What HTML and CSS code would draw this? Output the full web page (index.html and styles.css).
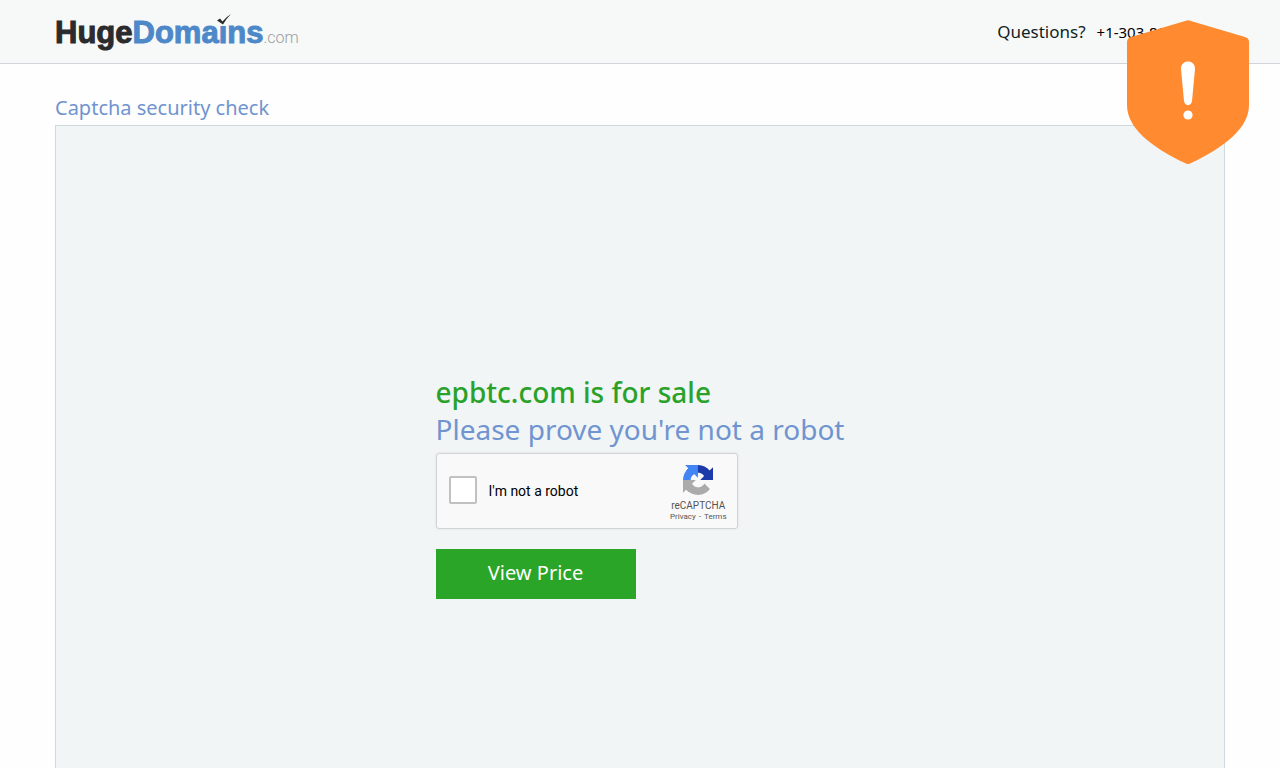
FILE: index.html
```html
<!DOCTYPE html>
<html lang="en">
<head>
<meta charset="utf-8">
<meta name="viewport" content="width=device-width, initial-scale=1">
<title>HugeDomains.com - Captcha security check</title>
<link rel="stylesheet" href="styles.css">
</head>
<body>
<header class="site-header">
  <div class="container header-row">
    <a class="logo" href="#"><span class="logo-huge">Huge</span><span class="logo-domains">Doma<span class="logo-i">i<svg class="logo-check" viewBox="0 0 16 13" aria-hidden="true"><rect x="4" y="5" width="8" height="7" fill="#f7f9f8"/><path d="M1 6.500 4 4.500 6.500 7.500Q10 3 15 0 10 5 7 10.500Z" fill="#2b2b2d"/></svg></span>ns</span><span class="logo-com">.com</span></a>
    <div class="contact"><span class="contact-label">Questions?</span><a class="phone" href="tel:+13038930552">+1-303-893-0552</a></div>
  </div>
</header>
<main class="container main">
  <h1 class="page-title">Captcha security check</h1>
  <section class="panel">
    <form class="check-form">
      <h2 class="domain">epbtc.com is for sale</h2>
      <p class="prompt">Please prove you're not a robot</p>
      <div class="captcha">
        <input class="captcha-box" type="checkbox" id="robot">
        <label class="captcha-label" for="robot">I'm not a robot</label>
        <div class="captcha-brand">
          <svg class="captcha-logo" viewBox="0 0 64 64" aria-hidden="true">
            <path fill="#1c3aa9" d="M64 31.955l-.014-1.37V4.687l-7.16 7.16C50.967 4.674 42.05.093 32.065.093c-10.39 0-19.622 4.96-25.458 12.64l11.736 11.86a15.55 15.55 0 0 1 4.754-5.334c2.05-1.6 4.952-2.906 8.968-2.906.485 0 .86.057 1.135.163 4.976.393 9.288 3.14 11.828 7.124l-8.307 8.307L64 31.953"/>
            <path fill="#4285f4" d="M31.862.094l-1.37.014H4.594l7.16 7.16C4.58 13.127 0 22.04 0 32.03c0 10.39 4.96 19.622 12.64 25.458L24.5 45.75a15.55 15.55 0 0 1-5.334-4.754c-1.6-2.05-2.906-4.952-2.906-8.968 0-.485.057-.86.163-1.135.393-4.976 3.14-9.288 7.124-11.828l8.307 8.307L31.86.095"/>
            <path fill="#ababab" d="M.001 32.028l.014 1.37v25.898l7.16-7.16c5.86 7.173 14.774 11.754 24.76 11.754 10.39 0 19.622-4.96 25.458-12.64l-11.736-11.86a15.55 15.55 0 0 1-4.754 5.334c-2.05 1.6-4.952 2.906-8.968 2.906-.485 0-.86-.057-1.135-.163-4.976-.393-9.288-3.14-11.828-7.124l8.307-8.307-27.28.01"/>
          </svg>
          <span class="captcha-name">reCAPTCHA</span>
          <span class="captcha-links"><a href="#">Privacy</a><span>-</span><a href="#">Terms</a></span>
        </div>
      </div>
      <button class="view-price" type="button">View Price</button>
    </form>
  </section>
</main>
<svg class="shield" viewBox="0 0 122 145" role="img" aria-label="Warning">
  <path fill="#ff8a30" d="M59 .700Q61-.300 63 .700L118 17Q122 18 122 22V85C122 108 98 127 63 143.500Q61 144.500 59 143.500C24 127 0 108 0 85V22Q0 18 4 17Z"/>
  <path fill="#fff" d="M54 49C53.500 39 68.500 39 68 49L65 81C64.500 86.500 57.500 86.500 57 81Z"/>
  <circle cx="61" cy="95" r="4.600" fill="#fff"/>
</svg>
</body>
</html>
```

FILE: styles.css
```css
* {
  box-sizing: border-box;
}

body {
  margin: 0;
  height: 100vh;
  overflow: hidden;
  display: flex;
  flex-direction: column;
  background: #fefefe;
  color: #0f1f24;
  font-family: "Noto Sans", sans-serif;
}

a {
  color: inherit;
  text-decoration: none;
}

.container {
  width: 100%;
  max-width: 1200px;
  margin: 0 auto;
  padding: 0 15px;
}

.site-header {
  background: #f7f9f8;
  border-bottom: 1px solid #cfd5d8;
}

.header-row {
  height: 63px;
  display: flex;
  align-items: center;
  justify-content: space-between;
}

.logo {
  padding-top: 8px;
  font-family: "Liberation Sans", Arial, sans-serif;
  font-size: 31px;
  font-weight: 700;
  line-height: 36px;
  display: flex;
  align-items: baseline;
}

.logo-huge {
  color: #2b2b2d;
  -webkit-text-stroke: 1px #2b2b2d;
}

.logo-domains {
  color: #4d88c9;
  -webkit-text-stroke: 1px #4d88c9;
}

.logo-i {
  position: relative;
}

.logo-check {
  position: absolute;
  left: -3px;
  top: -1px;
  width: 16px;
  height: 13px;
}

.logo-com {
  color: #9a9ea0;
  font-family: Roboto, sans-serif;
  font-size: 16px;
  font-weight: 300;
}

.contact {
  padding-right: 11px;
  display: flex;
  align-items: baseline;
  gap: 11px;
}

.contact-label {
  font-size: 17px;
}

.phone {
  color: #000;
  font-size: 15px;
}

.main {
  flex: 1;
  display: flex;
  flex-direction: column;
}

.page-title {
  margin: 30px 0 4px;
  color: #7094d0;
  font-size: 20px;
  font-weight: 400;
  line-height: 27px;
}

.panel {
  flex: 1;
  display: flex;
  justify-content: center;
  padding-top: 248px;
  background: #f1f5f6;
  border: 1px solid #d0d9dd;
  border-bottom: 0;
}

.domain,
.prompt {
  margin: 0;
  font-size: 28px;
  line-height: 37px;
}

.domain {
  color: #2aa22a;
  font-weight: 500;
}

.prompt {
  color: #7094d0;
}

.captcha {
  width: 302px;
  height: 76px;
  margin: 5px 0 20px;
  padding-left: 12px;
  padding-right: 10px;
  display: flex;
  align-items: center;
  background: #f9f9f9;
  border: 1px solid #d0d4d5;
  border-radius: 3px;
  box-shadow: 0 0 3px rgba(0, 0, 0, 0.08);
  font-family: Roboto, sans-serif;
}

.captcha-box {
  appearance: none;
  width: 28px;
  height: 28px;
  margin: 0 12px 2px 0;
  background: #fff;
  border: 2px solid #c1c1c1;
  border-radius: 2px;
}

.captcha-label {
  color: #000;
  font-size: 14px;
}

.captcha-brand {
  margin-left: auto;
  padding-top: 5px;
  display: flex;
  flex-direction: column;
  align-items: center;
  color: #555;
}

.captcha-logo {
  width: 30px;
  height: 30px;
}

.captcha-name {
  margin-top: 4px;
  font-size: 10px;
  line-height: 13px;
}

.captcha-links {
  display: flex;
  gap: 3px;
  font-size: 8px;
  line-height: 10px;
}

.view-price {
  display: block;
  width: 200px;
  height: 50px;
  padding: 0 0 4px;
  border: 0;
  background: #2aa527;
  color: #fff;
  font-family: "Noto Sans", sans-serif;
  font-size: 20px;
}

.shield {
  position: absolute;
  top: 20px;
  right: 31px;
  width: 122px;
  height: 145px;
}
```
